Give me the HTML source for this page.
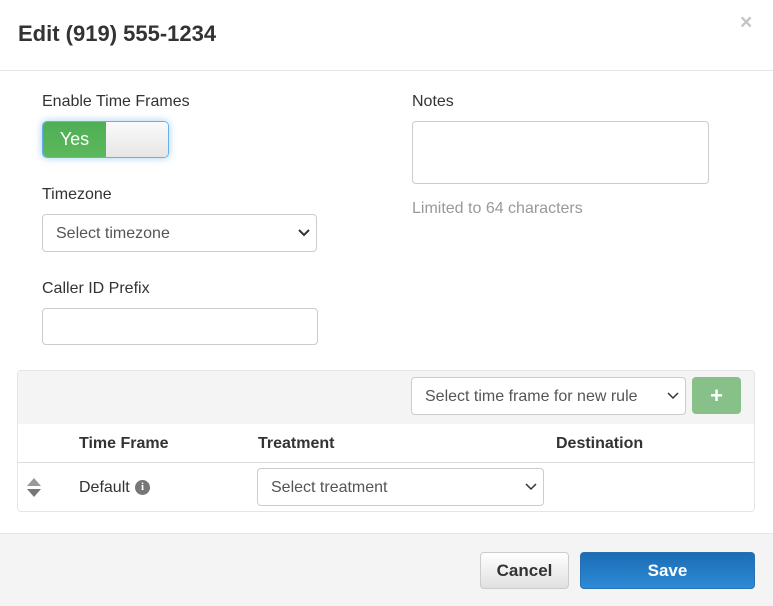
<!DOCTYPE html>
<html><head><style>
*{box-sizing:border-box}
body{margin:0;width:773px;height:606px;background:#fff;font-family:"Liberation Sans",sans-serif;color:#333;position:relative;overflow:hidden;font-size:16px}
.a{position:absolute}
.sel{position:absolute;border:1px solid #ccc;border-radius:4px;background:#fff;color:#555;font-size:16px;padding-left:13px;padding-top:2px;display:flex;align-items:center}
.chev{position:absolute;right:6px;top:50%;margin-top:-4px}
</style></head><body>
<div class="a" style="left:18px;top:21px;font-size:22px;font-weight:bold;color:#333">Edit (919) 555-1234</div>
<div class="a" style="left:740px;top:11px;font-size:21px;font-weight:bold;color:#c4c4c4">×</div>
<div class="a" style="left:0;top:70px;width:773px;height:1px;background:#e5e5e5"></div>

<div class="a" style="left:42px;top:93px">Enable Time Frames</div>
<div class="a" style="left:42px;top:121px;width:127px;height:37px;border:1px solid #66afe9;border-radius:5px;box-shadow:0 0 8px rgba(102,175,233,.6);overflow:hidden;display:flex">
<div style="width:63px;background:linear-gradient(#4fae55,#5cb85c);color:#fff;font-size:18px;display:flex;align-items:center;justify-content:center">Yes</div>
<div style="flex:1;background:linear-gradient(#fafafa,#e6e6e6)"></div></div>

<div class="a" style="left:42px;top:186px">Timezone</div>
<div class="sel" style="left:42px;top:214px;width:275px;height:38px">Select timezone<svg class="chev" width="12" height="8"><path d="M1 1l5 5 5-5" stroke="#333" stroke-width="2" fill="none"/></svg></div>

<div class="a" style="left:42px;top:280px">Caller ID Prefix</div>
<div class="sel" style="left:42px;top:308px;width:276px;height:37px"></div>

<div class="a" style="left:412px;top:93px">Notes</div>
<div class="sel" style="left:412px;top:121px;width:297px;height:63px"></div>
<div class="a" style="left:412px;top:200px;color:#999">Limited to 64 characters</div>

<div class="a" style="left:17px;top:370px;width:738px;height:142px;border:1px solid #e5e5e5;border-radius:4px;overflow:hidden">
<div style="height:53px;background:#f4f4f4"></div>
<div style="position:absolute;left:0;top:91px;width:100%;height:1px;background:#ddd"></div>
</div>
<div class="sel" style="left:411px;top:377px;width:275px;height:38px;font-size:16px">Select time frame for new rule<svg class="chev" width="12" height="8"><path d="M1 1l5 5 5-5" stroke="#333" stroke-width="1.5" fill="none"/></svg></div>
<div class="a" style="left:692px;top:377px;width:49px;height:37px;background:#88c08a;border-radius:4px;color:#fff;font-size:22px;font-weight:bold;display:flex;align-items:center;justify-content:center">+</div>
<div class="a" style="left:79px;top:435px;font-weight:bold;font-size:16px">Time Frame</div>
<div class="a" style="left:258px;top:435px;font-weight:bold;font-size:16px">Treatment</div>
<div class="a" style="left:556px;top:435px;font-weight:bold;font-size:16px">Destination</div>
<svg class="a" style="left:25px;top:477px" width="18" height="22"><path d="M9 1l7 8H2z" fill="#999"/><path d="M2 12h14l-7 8z" fill="#777"/></svg>
<div class="a" style="left:79px;top:479px;font-size:16px">Default</div>
<div class="a" style="left:135px;top:480px;width:15px;height:15px;border-radius:50%;background:#777;color:#fff;font-size:11px;font-weight:bold;text-align:center;line-height:15px;font-family:'Liberation Serif',serif">i</div>
<div class="sel" style="left:257px;top:468px;width:287px;height:38px">Select treatment<svg class="chev" width="12" height="8"><path d="M1 1l5 5 5-5" stroke="#333" stroke-width="1.5" fill="none"/></svg></div>

<div class="a" style="left:0;top:533px;width:773px;height:73px;background:#f4f4f4;border-top:1px solid #e5e5e5"></div>
<div class="a" style="left:480px;top:552px;width:89px;height:37px;border:1px solid #ccc;border-radius:4px;background:linear-gradient(#fff,#e0e0e0);font-weight:bold;font-size:17px;display:flex;align-items:center;justify-content:center">Cancel</div>
<div class="a" style="left:580px;top:552px;width:175px;height:37px;border:1px solid #2a6fb0;border-radius:4px;background:linear-gradient(#1b6cb4,#2d8ad6);color:#fff;font-weight:bold;font-size:17px;display:flex;align-items:center;justify-content:center">Save</div>
</body></html>
